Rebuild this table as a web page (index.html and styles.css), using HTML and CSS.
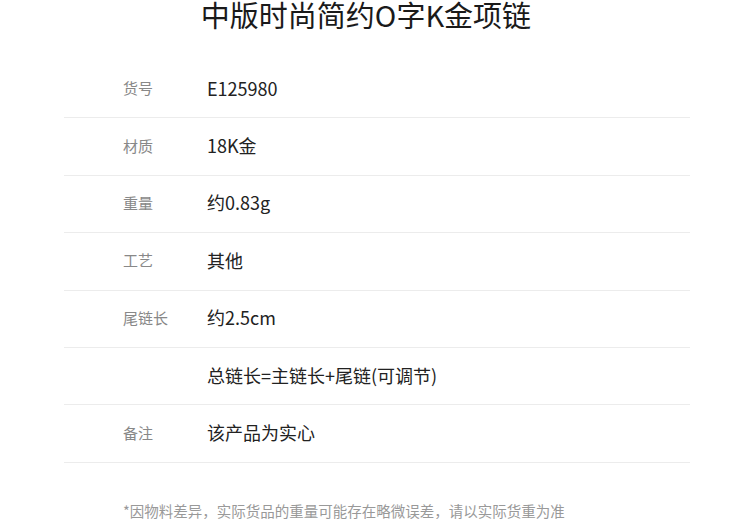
FILE: index.html
```html
<!DOCTYPE html>
<html lang="zh-CN">
<head>
<meta charset="utf-8">
<link rel="stylesheet" href="styles.css">
</head>
<body>
<div class="page">
  <h1 class="title">中版时尚简约O字K金项链</h1>
  <div class="table">
    <div class="row"><div class="label">货号</div><div class="value">E125980</div></div>
    <div class="row"><div class="label">材质</div><div class="value">18K金</div></div>
    <div class="row"><div class="label">重量</div><div class="value">约0.83g</div></div>
    <div class="row"><div class="label">工艺</div><div class="value">其他</div></div>
    <div class="row"><div class="label">尾链长</div><div class="value">约2.5cm</div></div>
    <div class="row"><div class="label"></div><div class="value">总链长=主链长+尾链(可调节)</div></div>
    <div class="row"><div class="label">备注</div><div class="value">该产品为实心</div></div>
  </div>
  <p class="note">*因物料差异，实际货品的重量可能存在略微误差，请以实际货重为准</p>
</div>
</body>
</html>
```
FILE: styles.css
```css
html, body {
  margin: 0;
  padding: 0;
  background: #fff;
}
body {
  font-family: "Noto Sans CJK SC", "Noto Sans", sans-serif;
  color: #222;
  overflow: hidden;
}
.page {
  width: 750px;
}
.title {
  margin: 0;
  height: 28px;
  line-height: 28px;
  font-size: 29px;
  font-weight: 400;
  text-align: center;
  padding-right: 18px;
  color: #1a1a1a;
}
.table {
  margin: 33px 0 0 64px;
  width: 626px;
}
.row {
  box-sizing: border-box;
  height: 57.4px;
  border-bottom: 1px solid #ececec;
  display: flex;
  align-items: center;
  padding-left: 59px;
  padding-bottom: 3px;
}
.label {
  width: 84px;
  font-size: 15px;
  color: #888;
}
.value {
  font-size: 18px;
  color: #222;
}
.note {
  margin: 39px 0 0 123px;
  font-size: 14.5px;
  line-height: 17px;
  color: #999;
}
```
